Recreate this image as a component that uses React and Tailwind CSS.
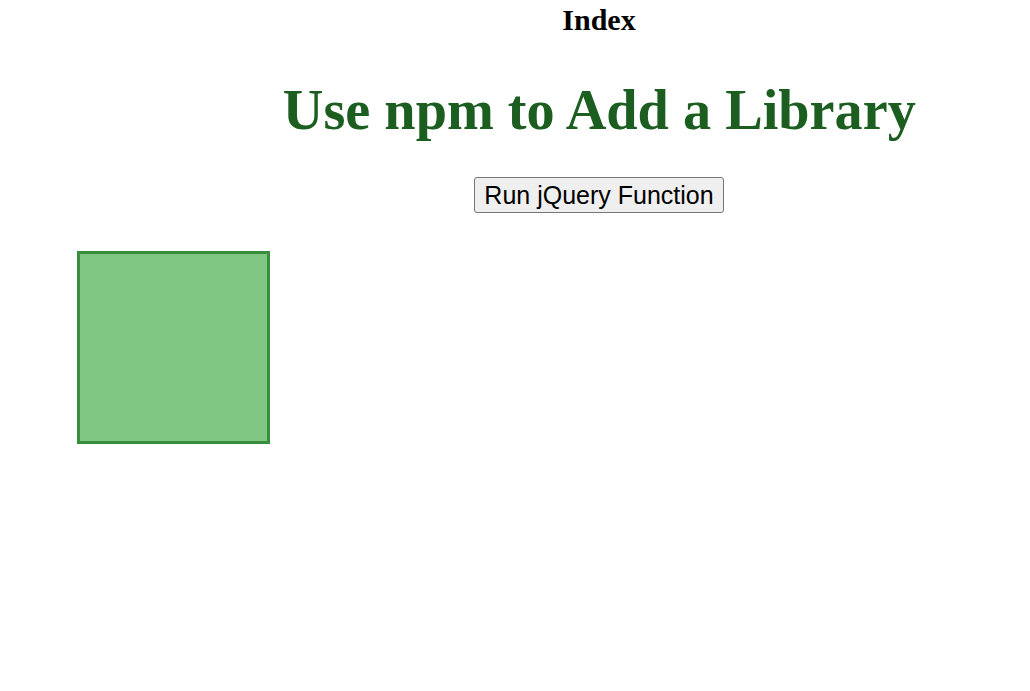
import React from 'react';

export default function App() {
    const runJquery = () => {
        console.log('jQuery function called');
    };

    return (
        <div className="min-h-[691px] bg-white">
            <div className="flex flex-col items-center pl-[168px]">
                <h2 className="mt-[5px] text-[30px] leading-[30px] font-bold text-black [font-family:'Liberation_Serif',serif]">
                    Index
                </h2>
                <h1 className="mt-[46px] scale-x-[0.97] text-[58px] leading-[58px] font-bold whitespace-nowrap text-[#1b5e20] [font-family:'Liberation_Serif',serif]">
                    Use npm to Add a Library
                </h1>
                <button
                    onClick={runJquery}
                    className="mt-[38px] flex h-[36px] w-[250px] items-center justify-center rounded-[3px] border border-[#767676] bg-[#efefef] text-[25px] leading-none text-black [font-family:'Liberation_Sans',Arial,sans-serif]"
                >
                    Run jQuery Function
                </button>
            </div>
            <div className="ml-[77px] mt-[38px] h-[193px] w-[193px] border-[3px] border-[#388e3c] bg-[#81c784]"></div>
        </div>
    );
}
